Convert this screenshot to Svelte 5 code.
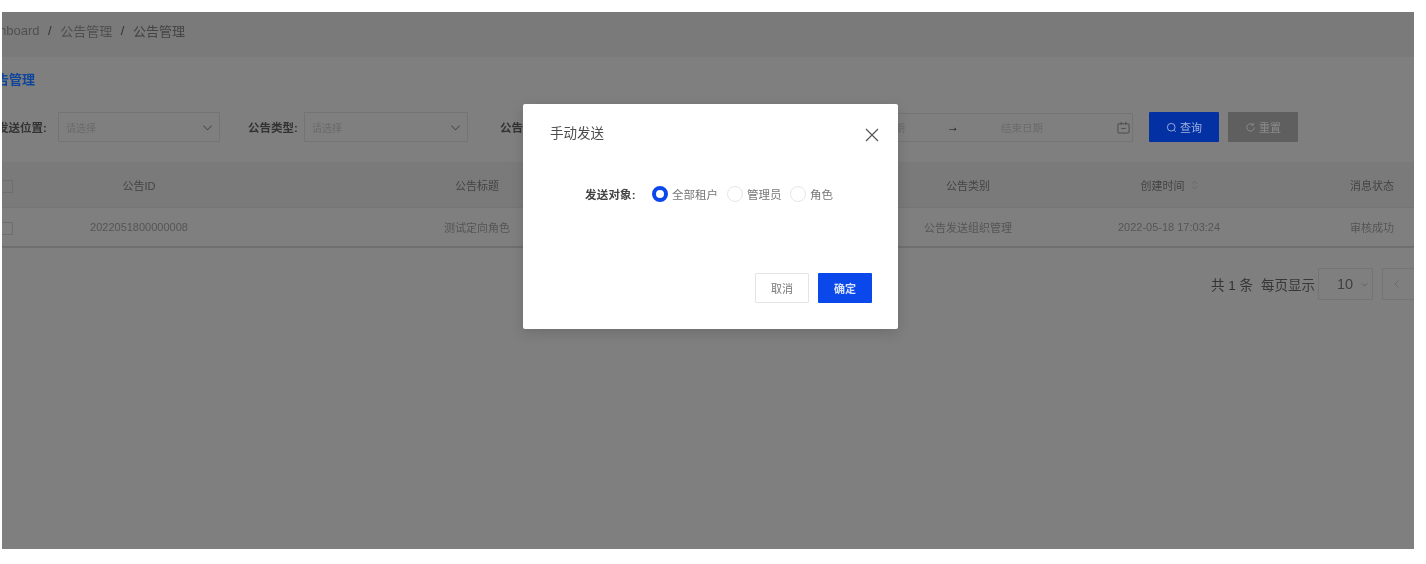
<script>
  const heads = ['公告ID', '公告标题', '', '公告类别', '创建时间', '消息状态'];
  const cells = ['2022051800000008', '测试定向角色', '', '公告发送组织管理', '2022-05-18 17:03:24', '审核成功'];
</script>

<div class="page">
  <div class="stage">
    <div class="inner">
      <nav class="crumbs">Dashboard<i>/</i>公告管理<i>/</i><b>公告管理</b></nav>
      <h1 class="title">公告管理</h1>

      <div class="filters">
        <span class="label first">发送位置:</span>
        <div class="select s1"><span>请选择</span>
          <svg viewBox="0 0 12 12"><path d="M1.5 4l4.5 4.5L10.5 4" /></svg></div>
        <span class="label second">公告类型:</span>
        <div class="select s2"><span>请选择</span>
          <svg viewBox="0 0 12 12"><path d="M1.5 4l4.5 4.5L10.5 4" /></svg></div>
        <span class="label third">公告状态:</span>
        <div class="select s3"></div>
        <div class="range">
          <span class="ph start">开始日期</span>
          <span class="arrow">→</span>
          <span class="ph end">结束日期</span>
          <svg class="cal" viewBox="0 0 14 14"><path d="M2 3h10a1 1 0 0 1 1 1v8a1 1 0 0 1-1 1H2a1 1 0 0 1-1-1V4a1 1 0 0 1 1-1zM4.5 1v3M9.5 1v3M4.5 8h5" /></svg>
        </div>
        <button class="btn query">
          <svg viewBox="0 0 12 12"><circle cx="5.7" cy="5.7" r="4.2" /><path d="M9 9l1.6 1.6" /></svg>查询
        </button>
        <button class="btn reset">
          <svg viewBox="0 0 12 12"><path d="M10 6a4 4 0 1 1-1.2-2.9M9 1v2.4H6.6" /></svg>重置
        </button>
      </div>

      <div class="table">
        <div class="row head">
          <div class="cell"><span class="check"></span></div>
          {#each heads as h, i}
            <div class="cell">{h}{#if i === 4}<svg class="sort" viewBox="0 0 8 12"><path d="M1 4.5L4 1.5l3 3M1 7.5l3 3 3-3" /></svg>{/if}</div>
          {/each}
        </div>
        <div class="row body">
          <div class="cell"><span class="check"></span></div>
          {#each cells as c}
            <div class="cell">{c}</div>
          {/each}
        </div>
      </div>

      <div class="pager">
        <span class="total">共 1 条</span>
        <span class="per">每页显示</span>
        <div class="size">10
          <svg viewBox="0 0 12 12"><path d="M2.5 4.5L6 8l3.5-3.5" /></svg></div>
        <div class="prev">
          <svg viewBox="0 0 12 12"><path d="M7.5 2.5L4 6l3.5 3.5" /></svg></div>
      </div>
    </div>
  </div>

  <div class="modal">
    <div class="modal-head">
      <span>手动发送</span>
      <svg class="close" viewBox="0 0 14 14"><path d="M1 1l12 12M13 1L1 13" /></svg>
    </div>
    <div class="modal-body">
      <span class="target">发送对象:</span>
      <span class="radio on"></span><span class="opt o1">全部租户</span>
      <span class="radio"></span><span class="opt o2">管理员</span>
      <span class="radio"></span><span class="opt">角色</span>
    </div>
    <div class="modal-foot">
      <button class="mbtn cancel">取消</button>
      <button class="mbtn ok">确定</button>
    </div>
  </div>
</div>

<style>
  :global(body) {
    margin: 0;
    background: #fff;
  }
  .page {
    position: relative;
    width: 1426px;
    height: 564px;
    overflow: hidden;
    padding: 12px 12px 15px 2px;
    box-sizing: border-box;
    font-family: "Liberation Sans", "Noto Sans CJK SC", sans-serif;
    filter: blur(0.7px);
  }
  .stage {
    width: 1412px;
    height: 537px;
    overflow: hidden;
    background: #7f7f7f;
  }
  .inner {
    width: 1500px;
  }
  .crumbs {
    height: 45px;
    margin-left: -26px;
    display: flex;
    align-items: center;
    font-size: 13px;
    color: #505050;
    background: #7a7a7a;
    padding-bottom: 9px;
    box-sizing: border-box;
  }
  .crumbs i {
    font-style: normal;
    margin: 0 8.5px;
    color: #333;
  }
  .crumbs b {
    font-weight: 400;
    color: #444;
  }
  .title {
    margin: 14px 0 0 -19px;
    height: 18px;
    line-height: 18px;
    font-size: 13px;
    font-weight: 700;
    color: #0f469c;
  }
  .filters {
    margin: 23px 0 0 -5px;
    height: 30px;
    display: flex;
    align-items: center;
    font-size: 11.5px;
  }
  .label {
    font-weight: 700;
    color: #333;
    white-space: nowrap;
  }
  .first { width: 61px; }
  .second { width: 56px; margin-left: 28px; }
  .third { width: 56px; margin-left: 32px; }
  .select {
    height: 30px;
    box-sizing: border-box;
    border: 1px solid #747474;
    display: flex;
    align-items: center;
    justify-content: space-between;
    padding: 0 6px 0 7px;
    font-size: 10px;
    color: #6a6a6a;
  }
  .select svg {
    width: 11px;
    height: 11px;
    fill: none;
    stroke: #4f4f4f;
    stroke-width: 1.1;
  }
  .s1 { width: 162px; }
  .s2 { width: 164px; }
  .s3 { width: 160px; }
  .range {
    width: 417px;
    margin-left: 0;
    height: 29px;
    box-sizing: border-box;
    border: 1px solid #747474;
    display: flex;
    align-items: center;
    font-size: 10.5px;
    color: #6b6b6b;
  }
  .ph.start { width: 84px; margin-left: 146px; }
  .arrow { width: 54px; color: #111; font-size: 12px; font-weight: 700; }
  .ph.end { width: 116px; }
  .cal {
    width: 13px;
    height: 13px;
    fill: none;
    stroke: #4a4a4a;
    stroke-width: 1;
  }
  .btn {
    height: 30px;
    width: 70px;
    border: 0;
    border-radius: 1px;
    padding: 0;
    font: inherit;
    font-size: 11px;
    display: flex;
    align-items: center;
    justify-content: center;
    gap: 3px;
  }
  .btn svg {
    width: 11px;
    height: 11px;
    fill: none;
    stroke: currentColor;
    stroke-width: 1;
  }
  .query {
    margin-left: 16px;
    background: #0331a3;
    color: #9fb2dc;
  }
  .reset {
    margin-left: 9px;
    background: #5f5f5f;
    color: #8c8c8c;
  }
  .table {
    margin-top: 20px;
    font-size: 11px;
    color: #4f4f4f;
  }
  .row {
    display: grid;
    grid-template-columns: 11px 252px 424px 181px 196px 206px 200px;
    margin-right: 12px;
  }
  .head {
    height: 46px;
    background: #7a7a7a;
    color: #444;
    border-bottom: 1px solid #757575;
    box-sizing: border-box;
  }
  .body {
    height: 40px;
    border-bottom: 2px solid #6f6f6f;
    box-sizing: border-box;
    color: #555;
  }
  .cell {
    display: flex;
    align-items: center;
    justify-content: center;
    white-space: nowrap;
  }
  .cell:first-child {
    justify-content: flex-end;
  }
  .check {
    width: 11px;
    height: 13px;
    margin-top: 3px;
    box-sizing: border-box;
    border: 1px solid #6e6e6e;
    border-left: 0;
    border-radius: 1px;
  }
  .sort {
    width: 7px;
    height: 10px;
    margin-left: 6px;
    fill: none;
    stroke: #666;
    stroke-width: 1;
  }
  .pager {
    margin-top: 20px;
    display: flex;
    align-items: center;
    height: 32px;
    margin-left: 1209px;
    font-size: 13.5px;
    color: #333;
  }
  .total { width: 50px; white-space: nowrap; }
  .per { width: 57px; white-space: nowrap; color: #383838; }
  .size {
    width: 55px;
    height: 32px;
    box-sizing: border-box;
    border: 1px solid #747474;
    display: flex;
    align-items: center;
    justify-content: space-between;
    padding: 0 3px 0 18px;
    font-size: 14.5px;
    color: #3f3f3f;
  }
  .size svg {
    width: 9px;
    height: 9px;
    fill: none;
    stroke: #555;
    stroke-width: 1;
  }
  .prev {
    width: 34px;
    height: 32px;
    margin-left: 9px;
    box-sizing: border-box;
    border: 1px solid #747474;
    padding: 9px 0 0 8px;
  }
  .prev svg {
    display: block;
    width: 12px;
    height: 12px;
    fill: none;
    stroke: #6a6a6a;
    stroke-width: 1;
  }
  .modal {
    position: absolute;
    left: 523px;
    top: 104px;
    width: 375px;
    height: 225px;
    background: #fff;
    border-radius: 2px;
    box-shadow: 0 4px 14px rgba(0, 0, 0, 0.14);
    box-sizing: border-box;
    display: flex;
    flex-direction: column;
  }
  .modal-head {
    height: 58px;
    padding: 0 19px 0 27px;
    display: flex;
    align-items: center;
    justify-content: space-between;
    font-size: 13.5px;
    color: #4d4d4d;
  }
  .modal-head span {
    margin-bottom: 2px;
  }
  .close {
    width: 14px;
    height: 14px;
    margin-top: 4px;
    fill: none;
    stroke: #555;
    stroke-width: 1.2;
  }
  .modal-body {
    height: 64px;
    padding: 0 0 0 62px;
    display: flex;
    align-items: center;
    font-size: 11.5px;
    color: #777;
  }
  .target {
    width: 67px;
    font-weight: 700;
    color: #444;
    white-space: nowrap;
    letter-spacing: 0.2px;
  }
  .radio {
    width: 16px;
    height: 16px;
    box-sizing: border-box;
    border: 1px solid #e6e6e6;
    border-radius: 50%;
    margin-right: 4px;
    flex: none;
  }
  .radio.on {
    border: 4.5px solid #0a48ec;
  }
  .opt { white-space: nowrap; }
  .o1 { width: 55px; }
  .o2 { width: 43px; }
  .modal-foot {
    flex: 1;
    display: flex;
    justify-content: flex-end;
    gap: 9px;
    padding: 47px 26px 0 0;
    box-sizing: border-box;
  }
  .mbtn {
    width: 54px;
    height: 30px;
    border-radius: 1px;
    padding: 0;
    font: inherit;
    font-size: 11px;
  }
  .cancel {
    background: #fff;
    border: 1px solid #e4e4e4;
    color: #777;
  }
  .ok {
    background: #0a48ec;
    border: 0;
    color: #d8e2fb;
    font-weight: 700;
  }
</style>
